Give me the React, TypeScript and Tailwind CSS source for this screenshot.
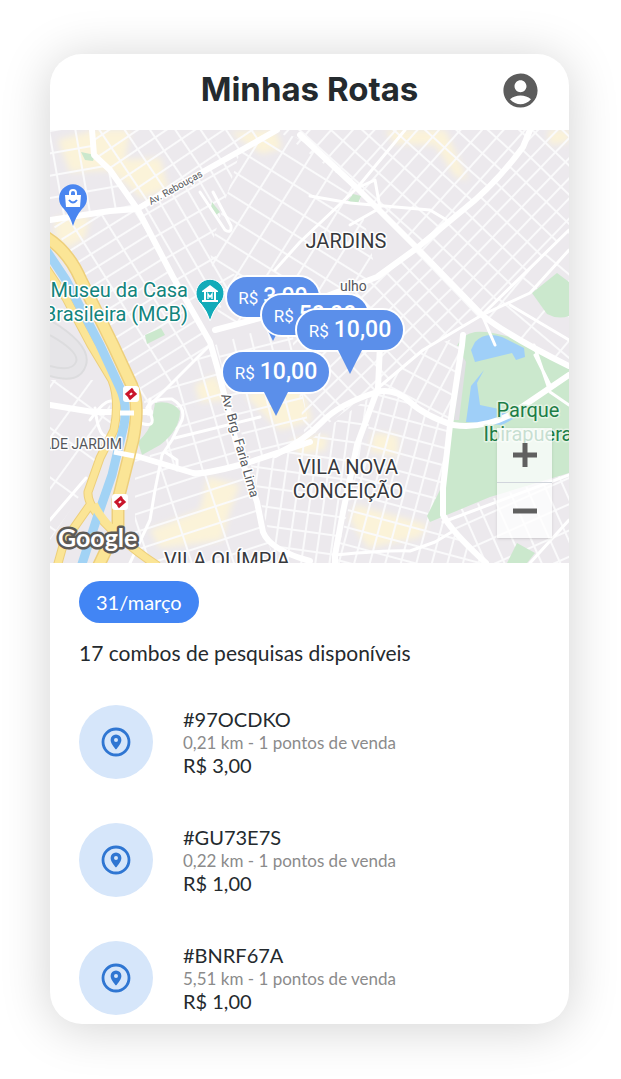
import { MdAccountCircle } from "react-icons/md";

const ROUTES = [
  { code: "#97OCDKO", distance: "0,21 km", points: 1, price: "R$ 3,00" },
  { code: "#GU73E7S", distance: "0,22 km", points: 1, price: "R$ 1,00" },
  { code: "#BNRF67A", distance: "5,51 km", points: 1, price: "R$ 1,00" },
];

// Price bubbles over the map, from back to front
const MARKERS = [
  { value: "3,00", place: "left-[175px] top-[145px] w-[96px]" },
  { value: "50,00", place: "left-[210px] top-[163px] w-[110px]" },
  { value: "10,00", place: "left-[245px] top-[178px] w-[110px]" },
  { value: "10,00", place: "left-[171px] top-[220px] w-[110px]" },
];

// Blocks of small streets: each area gets a grid turned to its own angle
const DISTRICTS = [
  { id: "nw", w: 22, h: 26, angle: 80, area: "M0 0H42L44 25 60 40 87 80 0 90z" },
  { id: "n", w: 16, h: 21, angle: 56, area: "M42 0H227L87 80 60 40 44 25z" },
  { id: "w", w: 14, h: 30, angle: 58, area: "M0 90 87 80 160 215 97 278 83 250 60 195 30 140z" },
  { id: "e1", w: 24, h: 15, angle: 60, area: "M87 80 190 22 160 120 200 160 150 190z" },
  { id: "e2", w: 26, h: 21, angle: 32, area: "M190 22 227 0 260 13 307 58 327 147 170 200 160 120z" },
  { id: "ne", w: 16, h: 21, angle: 42, area: "M227 0H480L473 17 413 80 367 118 307 58z" },
  { id: "e", w: 14, h: 21, angle: 44, area: "M480 0H519V100L432 185 367 118 413 80 473 17z" },
  { id: "mid", w: 14, h: 18, angle: 46, area: "M367 118 432 185 373 220 328 258 255 310 240 190 327 147z" },
  { id: "se", w: 38, h: 32, angle: 40, area: "M432 185 519 100V238L470 208z" },
  { id: "park", w: 15, h: 22, angle: 28, area: "M328 258 373 220 412 205 402 295 387 292 347 263z" },
  { id: "sw", w: 30, h: 40, angle: 36, area: "M0 250H50L60 270 62 310 30 365 0 410z" },
  { id: "s1", w: 26, h: 20, angle: -16, area: "M97 278 160 215 200 332 143 343 100 330z" },
  { id: "s2", w: 18, h: 20, angle: -14, area: "M165 215 240 190 260 305 200 332z" },
  { id: "s3", w: 40, h: 17, angle: -18, area: "M85 328 143 343 195 335 213 402 227 433H85z" },
  { id: "s4", w: 14, h: 19, angle: 8, area: "M200 332 260 310 327 262 285 433H227z" },
  { id: "s5", w: 15, h: 17, angle: 15, area: "M327 262H347L387 292 400 295 393 385 433 433H285z" },
  { id: "s6", w: 17, h: 24, angle: -24, area: "M393 385 519 343V433H433z" },
];

const STREETS = [
  "M0 90 60 81 87 79 227 0",
  "M42 0 44 25 60 40 88 80 123 147 160 212 168 240 188 320 207 372 213 402Q220 420 260 431",
  "M250 5 307 58 367 118 432 185Q460 207 519 236",
  "M480 0 473 17Q445 55 413 80L367 118 327 147 240 180 165 200",
  "M0 275 43 282H100",
  "M83 325 143 343Q155 345 200 332L260 312",
  "M225 325Q255 310 272 292T327 262Q345 258 360 272T403 295Q433 299 460 285L519 245",
  "M413 205 412 215 400 295 393 358V385Q400 400 436 433",
  "M330 215 328 258 307 315 293 382 285 425V433",
];

const SIDE_STREETS = [
  "M519 100 432 185 373 220 328 258",
  "M355 0 307 58 250 112 225 140",
  "M160 215 97 278",
  "M307 58 325 50 330 78 300 95 M260 66 300 73 380 80 400 92",
  "M97 278Q100 268 122 269 136 277 132 290L122 310 112 325 105 360 100 390 80 433",
  "M125 308 210 287",
  "M115 322 127 330V340",
  "M0 390 36 348 M40 290Q60 262 66 275 M66 300Q50 320 45 278",
  "M100 269V283Q108 300 88 292",
  "M285 425Q340 420 360 421L385 412 405 400",
  "M393 392 519 345 M480 433 519 390",
  "M484 215 500 262 519 275 M500 255 485 225",
  "M432 185 480 163 519 120 M432 185 445 215 M460 175 519 210",
  "M150 62 175 100Q182 104 181 96L163 62",
];

const RAIL_STOPS = [
  { x: 81, y: 264 },
  { x: 70, y: 372 },
];

function CityMap() {
  return (
    <svg
      className="absolute inset-0 h-full w-full"
      viewBox="0 0 519 433"
      preserveAspectRatio="xMidYMid slice"
      fontFamily="Roboto, sans-serif"
      aria-label="Mapa"
    >
      <defs>
        {DISTRICTS.map((d) => (
          <pattern
            key={d.id}
            id={`grid-${d.id}`}
            width={d.w}
            height={d.h}
            patternUnits="userSpaceOnUse"
            patternTransform={`rotate(${d.angle})`}
          >
            <path d={`M0 1H${d.w}M1 0V${d.h}`} stroke="#fafafb" strokeWidth="2" />
          </pattern>
        ))}
        <filter id="soft">
          <feGaussianBlur stdDeviation="3" />
        </filter>
      </defs>

      <rect width="519" height="433" fill="#ece9ed" />

      {/* Commercial areas */}
      <g fill="#fbf3d9" filter="url(#soft)">
        <path d="M8 10 45 0H80L75 30 110 28 118 58 92 68 60 40 20 42z" />
        <path d="M5 88 40 86 35 108 18 118 5 108zM180 2 225 0 232 18 212 24z" />
        <path d="M335 0H395L418 50 405 46 385 15 345 14zM498 0H519V12L500 15z" />
        <path d="M145 255 165 245 178 270 150 272zM195 265 250 250 262 290 230 300zM240 310 278 305 275 320 250 325z" />
        <path d="M158 347 190 355 180 380 172 410 110 418 100 400 150 380z" />
        <path d="M323 303 348 305V326L320 322zM305 375 378 395 370 407 318 418 300 390z" />
      </g>

      {DISTRICTS.map((d) => (
        <path key={d.id} d={d.area} fill={`url(#grid-${d.id})`} />
      ))}

      {/* Jockey club track */}
      <g fill="none" stroke="#dcdcde" strokeWidth="2">
        <path d="M0 190Q42 215 36 235T0 246" fill="#e6e5e8" />
        <path d="M0 205Q30 222 26 232T0 236" />
      </g>

      {/* Parks */}
      <g fill="#cbe8cd">
        <path d="M407 216Q412 204 425 202T470 210L519 238V343L440 367 380 392 377 386 395 350 402 290 414 215z" />
        <path d="M482 163 507 143 519 152V186Q508 190 497 184z" />
        <path d="M105 273Q122 270 130 281 130 300 110 315L92 325 88 312Q100 300 102 290z" />
        <path d="M457 433 467 413 485 423 477 433z" />
        <path d="M31 22 45 25 43 31 35 30zM162 72 170 82 166 85 161 78zM95 205 111 198 115 205 97 214zM303 64 311 66 308 73 298 71z" />
      </g>
      <path d="M412 225 416 232 409 290 404 290z" fill="#e1e0e4" />
      <path
        d="M425 212Q435 201 452 207L474 218 475 227 466 230 462 223 425 232 421 220zM434 240 427 253 430 275 449 279 465 288 452 295 416 292 421 256z"
        fill="#9fcff8"
      />

      <g fill="none" stroke="#fff" strokeLinejoin="round" strokeLinecap="round">
        {SIDE_STREETS.map((d) => (
          <path key={d} d={d} strokeWidth="3" />
        ))}
        {STREETS.map((d) => (
          <path key={d} d={d} strokeWidth="6" />
        ))}
      </g>

      {/* River and the expressways along it */}
      {[
        { color: "#edcf7c", inner: 9, outer: 13 },
        { color: "#fbe596", inner: 7, outer: 10 },
      ].map((layer) => (
        <g key={layer.color} fill="none" stroke={layer.color}>
          <path
            d="M-4 138 16 168 41 215 62 250Q70 270 64 300L50 328 38 362Q37 376 60 398T108 436M42 372 14 412 7 437"
            strokeWidth={layer.inner}
          />
          <path
            d="M-6 106Q18 120 31 150L63 215 82 256Q90 275 83 310L68 370V395L48 437"
            strokeWidth={layer.outer}
          />
        </g>
      ))}
      <path
        d="M-4 120 16 150 50 215 70 258Q78 275 74 295L62 345 47 388 31 437"
        fill="none"
        stroke="#a2d3f5"
        strokeWidth="9"
      />
      <path d="M44 374Q50 388 66 403" fill="none" stroke="#fbe596" strokeWidth="8" />
      <path d="M70 283H84M64 322 84 326" stroke="#fff" strokeWidth="5" />

      {/* Train stations */}
      {RAIL_STOPS.map((s) => (
        <g key={s.x} transform={`translate(${s.x} ${s.y})`}>
          <rect x="-8" y="-8" width="16" height="16" rx="3" fill="#fff" />
          <path d="M2-5-4 0-1 3M-2 5 4 0 1-3" fill="none" stroke="#c9152b" strokeWidth="3" />
        </g>
      ))}

      {/* Shopping pin */}
      <path d="M23 96Q20 86 14 79A14 14 0 1 1 32 79Q26 86 23 96z" fill="#4a86f0" />
      <path d="M15 65H31L30 77H16z" fill="#fff" />
      <path d="M20 66V63Q20 60 23 60T26 63V66" fill="none" stroke="#fff" strokeWidth="2" />
      <path d="M19 70Q23 75 27 70" fill="none" stroke="#4a86f0" strokeWidth="2" />

      {/* Museum pin */}
      <path d="M160 191Q157 181 151 174A14 14 0 1 1 169 174Q163 181 160 191z" fill="#12abb9" stroke="#fff" />
      <path d="M152 161 160 155 168 161V162H152zM152 170H168V172H152zM154 162H156V171H154zM164 162H166V171H164z" fill="#fff" />
      <path d="M158 169V164L160 167 162 164V169" fill="none" stroke="#fff" strokeWidth="1.4" />

      {/* Place names */}
      <g fill="#37393d" stroke="#fff" strokeWidth="3" paintOrder="stroke" strokeLinejoin="round" fontSize="20">
        <text x="296" y="118" textAnchor="middle">JARDINS</text>
        <text x="298" y="344" textAnchor="middle">VILA NOVA</text>
        <text x="298" y="368" textAnchor="middle">CONCEIÇÃO</text>
        <text x="177" y="437" textAnchor="middle">VILA OLÍMPIA</text>
        <g fill="#13847d" textAnchor="end">
          <text x="138" y="167">Museu da Casa</text>
          <text x="138" y="191">Brasileira (MCB)</text>
        </g>
        <g fill="#1d7d47" stroke="#e4f3e5" textAnchor="middle">
          <text x="478" y="287">Parque</text>
          <text x="478" y="311">Ibirapuera</text>
        </g>
        <g fill="#55575b" fontSize="14">
          <text x="72" y="319" textAnchor="end">ADE JARDIM</text>
          <text x="290" y="161">ulho</text>
          <text transform="translate(171 265) rotate(74)" fontSize="13">Av. Brg. Faria Lima</text>
          <text transform="translate(101 75) rotate(-29)" fontSize="10">Av. Rebouças</text>
        </g>
      </g>
      <text
        x="8"
        y="417"
        fontSize="25"
        fontWeight="700"
        fontFamily="Lato, sans-serif"
        fill="#fff"
        stroke="#5d5b57"
        strokeWidth="5"
        paintOrder="stroke"
        strokeLinejoin="round"
      >
        Google
      </text>
    </svg>
  );
}

function PriceMarker({ value, place }: { value: string; place: string }) {
  return (
    <button type="button" className={`absolute h-[44px] ${place}`}>
      <span className="relative flex h-full items-baseline justify-center gap-[5px] rounded-full border-2 border-white bg-[#5b8fea] pt-1 font-[Roboto,sans-serif] text-white">
        <span className="text-[17px] leading-8">R$</span>
        <span className="text-[23px] font-medium leading-8">{value}</span>
      </span>
      <svg className="absolute left-1/2 top-[42px] -ml-3" width="24" height="24" viewBox="0 0 24 24" aria-hidden="true">
        <path d="M0 0H24L12 24z" fill="#5b8fea" />
      </svg>
    </button>
  );
}

function RouteIcon() {
  return (
    <span className="flex size-[74px] shrink-0 items-center justify-center rounded-full bg-[#d6e6fa]">
      <svg width="30" height="30" viewBox="0 0 30 30" aria-hidden="true">
        <circle cx="15" cy="15" r="13" fill="none" stroke="#2f76d2" strokeWidth="2.8" />
        <path
          d="M15 7.5a5.4 5.4 0 0 0-5.4 5.4c0 4 5.4 9.6 5.4 9.6s5.4-5.6 5.4-9.6A5.4 5.4 0 0 0 15 7.5zm0 7.4a2 2 0 1 1 0-4 2 2 0 0 1 0 4z"
          fill="#2f76d2"
        />
      </svg>
    </span>
  );
}

const App = () => {
  return (
    <div className="min-h-screen bg-white pt-[54px] pr-[52px] pb-[55px] pl-[50px] font-[Lato,sans-serif] text-[#242a2e]">
      <main className="overflow-hidden rounded-[32px] bg-white shadow-[0_4px_50px_rgba(0,0,0,0.18)]">
        <header className="grid h-[76px] grid-cols-[1fr_auto_1fr] items-center px-7 pb-1">
          <h1 className="col-start-2 font-[Inter,sans-serif] text-[33px] font-bold">Minhas Rotas</h1>
          <button type="button" aria-label="Perfil" className="justify-self-end text-[#5c5c5c]">
            <MdAccountCircle size={41} />
          </button>
        </header>

        <section className="relative h-[433px] overflow-hidden">
          <CityMap />
          {MARKERS.map((m) => (
            <PriceMarker key={m.place} value={m.value} place={m.place} />
          ))}
          <div className="absolute right-[17px] bottom-[25px] w-[55px] divide-y divide-gray-300 bg-white/75 shadow-sm">
            <button type="button" aria-label="Aumentar zoom" className="flex h-[55px] w-full items-center justify-center">
              <svg width="24" height="24" viewBox="0 0 24 24" stroke="#606060" strokeWidth="5">
                <path d="M0 12H24M12 0V24" />
              </svg>
            </button>
            <button type="button" aria-label="Diminuir zoom" className="flex h-[55px] w-full items-center justify-center">
              <svg width="24" height="24" viewBox="0 0 24 24" stroke="#606060" strokeWidth="5">
                <path d="M0 12H24" />
              </svg>
            </button>
          </div>
        </section>

        <section className="px-[29px] pt-[18px] pb-[9px]">
          <button type="button" className="h-[42px] rounded-full bg-[#4285f4] px-[17px] text-[20px] text-white">
            31/março
          </button>
          <p className="mt-4 text-[21px] leading-7">17 combos de pesquisas disponíveis</p>
          <ul className="mt-[38px] flex flex-col gap-11">
            {ROUTES.map((route) => (
              <li key={route.code} className="flex items-center gap-[30px]">
                <RouteIcon />
                <div className="text-[20px] leading-[23px]">
                  <p>{route.code}</p>
                  <p className="text-[17px] leading-[23px] text-[#8b8b8b]">
                    {route.distance} - {route.points} pontos de venda
                  </p>
                  <p>{route.price}</p>
                </div>
              </li>
            ))}
          </ul>
        </section>
      </main>
    </div>
  );
};

export default App;
